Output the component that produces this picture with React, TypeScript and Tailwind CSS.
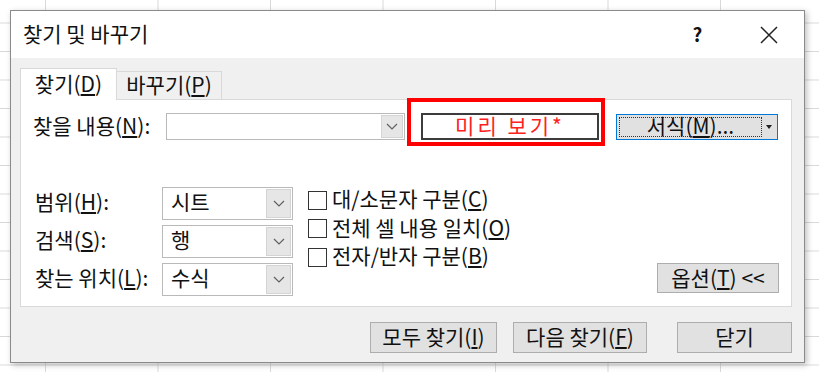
import React from 'react';

const Chevron = () => (
    <svg width="12" height="7" viewBox="0 0 12 7" fill="none">
        <path d="M1 1l5 5 5-5" stroke="#606060" strokeWidth="1.2" />
    </svg>
);

function Select({ value }: { value: string }) {
    return (
        <div className="flex h-[33px] w-[131px] border border-[#b9b9b9] bg-white">
            <div className="flex flex-1 items-center pb-[4px] pl-[8px] text-[21px] leading-none">{value}</div>
            <div className="m-px flex w-[25px] items-center justify-center border border-[#d4d4d4] bg-[#e6e6e6]">
                <Chevron />
            </div>
        </div>
    );
}

function Check({ children }: { children: React.ReactNode }) {
    return (
        <div className="flex h-[28.5px] items-center gap-[5px]">
            <div className="h-[19px] w-[19px] border border-[#333] bg-white" />
            <span className="pb-[3px] text-[21px] leading-none">{children}</span>
        </div>
    );
}

function Btn({ w, children }: { w: string; children: React.ReactNode }) {
    return (
        <div className={`flex h-[31px] items-center justify-center border border-[#adadad] bg-[#e1e1e1] pb-[2px] text-[21px] leading-none ${w}`}>
            {children}
        </div>
    );
}

export default function App() {
    return (
        <div className="h-[372px] w-[819px] overflow-hidden bg-white bg-[linear-gradient(to_right,#d9d9d9_1px,transparent_1px),linear-gradient(to_bottom,#d9d9d9_1px,transparent_1px)] bg-[size:112.5px_28.5px] bg-[position:45px_22.5px] pl-[10px] pt-[10px] font-['Noto_Sans_CJK_KR','Noto_Sans',sans-serif] text-[#111]">
            {/* Dialog */}
            <div className="flex h-[353px] w-[795px] flex-col border border-[#8a8a8a] shadow-[2px_2px_6px_rgba(0,0,0,0.25)]">
                {/* Title bar */}
                <div className="flex h-[47px] items-center bg-white">
                    <span className="-mt-[3px] pl-[12px] text-[21px] leading-none">찾기 및 바꾸기</span>
                    <div className="ml-auto flex">
                        <div className="-mt-[2px] flex w-[71px] items-center justify-center text-[19px] font-semibold leading-none">?</div>
                        <div className="flex w-[71px] items-center justify-center">
                            <svg width="18" height="18" viewBox="0 0 18 18">
                                <path d="M1 1l16 16M17 1L1 17" stroke="#222" strokeWidth="1.5" />
                            </svg>
                        </div>
                    </div>
                </div>

                {/* Body */}
                <div className="flex flex-1 flex-col bg-[#f0f0f0] pl-[9px] pr-[12px] pt-[10px]">
                    {/* Tabs */}
                    <div className="relative z-10 -mb-px flex items-end">
                        <div className="flex h-[32px] w-[97px] items-center justify-center border border-b-0 border-[#d9d9d9] bg-white pb-[2px] text-[21px] leading-none">
                            찾기(<u>D</u>)
                        </div>
                        <div className="mb-px flex h-[28px] w-[105px] items-center justify-center border border-b-0 border-l-0 border-[#d9d9d9] bg-[#f0f0f0] pb-[2px] text-[21px] leading-none">
                            바꾸기(<u>P</u>)
                        </div>
                    </div>

                    {/* Panel */}
                    <div className="relative flex h-[208px] flex-col border border-[#d9d9d9] bg-white">
                        <div className="mt-[13px] flex items-center">
                            <div className="w-[145px] pb-[3px] pl-[12px] text-[21px] leading-none">
                                찾을 내용(<u>N</u>):
                            </div>
                            <div className="flex h-[27px] w-[239px] border border-[#b9b9b9] bg-white">
                                <div className="flex-1" />
                                <div className="m-px flex w-[22px] items-center justify-center border border-[#d4d4d4] bg-[#e6e6e6]">
                                    <Chevron />
                                </div>
                            </div>
                            <div className="ml-[16px] flex h-[27px] w-[178px] items-center justify-center border-2 border-[#3c3c3c] bg-white pb-[2px] text-[21px] leading-none tracking-[3px] text-[#ff2020]">
                                미리 보기*
                            </div>
                            <div className="ml-[17px] flex h-[26px] w-[162px] border border-[#0078d7] bg-[#e1e1e1] p-[2px]">
                                <div className="flex flex-1 items-center justify-center border border-dotted border-[#333] pb-[2px] text-[21px] leading-none">
                                    서식(<u>M</u>)...
                                </div>
                                <div className="flex w-[13px] items-center justify-center">
                                    <svg width="6" height="4" viewBox="0 0 6 4">
                                        <path d="M0 0h6L3 4z" fill="#222" />
                                    </svg>
                                </div>
                            </div>
                        </div>

                        {/* Red highlight */}
                        <div className="absolute left-[386px] top-[-2px] h-[48px] w-[198px] border-4 border-[#ff0000]" />

                        <div className="mt-[47px] flex flex-1 items-start pl-[14px] pr-[12px]">
                            <div className="grid grid-cols-[127px_131px] items-center gap-y-[5px] text-[21px] leading-none">
                                <span className="pb-[4px]">범위(<u>H</u>):</span>
                                <Select value="시트" />
                                <span className="pb-[4px]">검색(<u>S</u>):</span>
                                <Select value="행" />
                                <span className="pb-[4px]">찾는 위치(<u>L</u>):</span>
                                <Select value="수식" />
                            </div>
                            <div className="-mt-px ml-[15px] flex flex-col">
                                <Check>대/소문자 구분(<u>C</u>)</Check>
                                <Check>전체 셀 내용 일치(<u>O</u>)</Check>
                                <Check>전자/반자 구분(<u>B</u>)</Check>
                            </div>
                            <div className="ml-auto mt-[76px] flex h-[30px] w-[122px] items-center justify-center border border-[#adadad] bg-[#e1e1e1] pb-[2px] text-[21px] leading-none">
                                옵션(<u>T</u>) &lt;&lt;
                            </div>
                        </div>
                    </div>

                    {/* Bottom buttons */}
                    <div className="mt-[15px] flex justify-end">
                        <Btn w="w-[127px]">모두 찾기(<u>I</u>)</Btn>
                        <div className="w-[16px]" />
                        <Btn w="w-[134px]">다음 찾기(<u>F</u>)</Btn>
                        <div className="w-[30px]" />
                        <Btn w="w-[115px]">닫기</Btn>
                    </div>
                </div>
            </div>
        </div>
    );
}
